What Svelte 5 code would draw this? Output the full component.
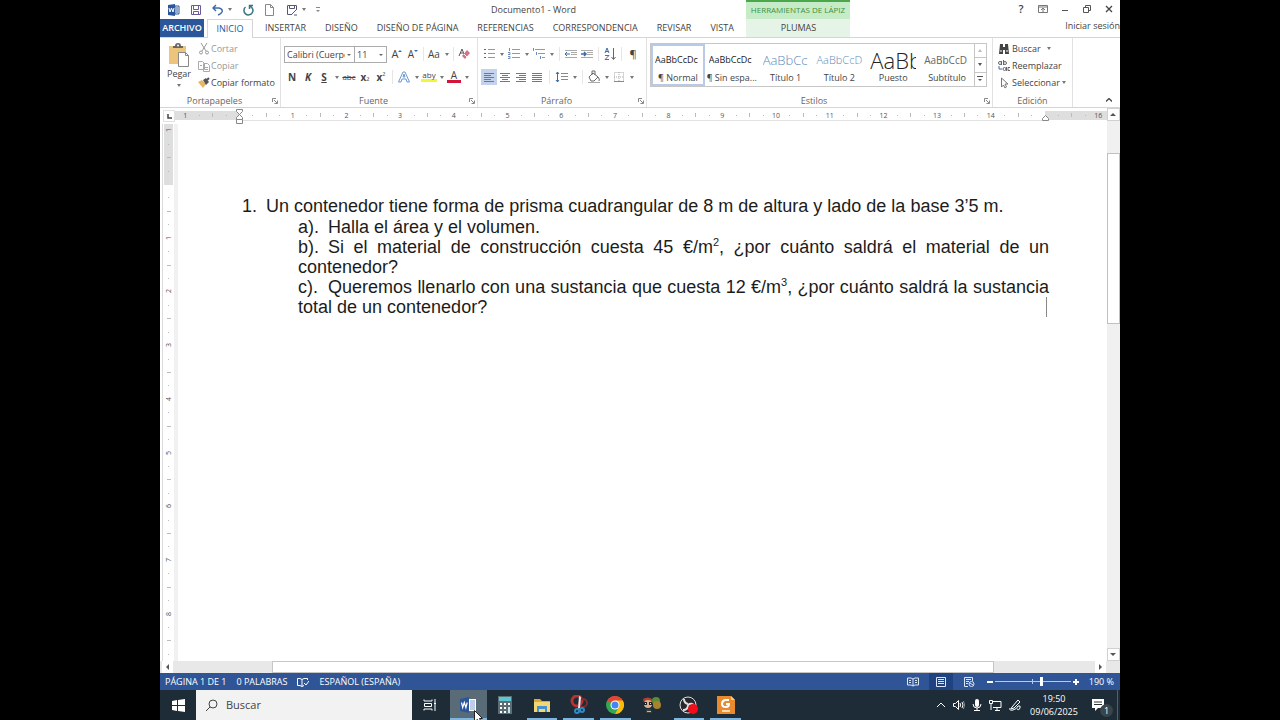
<script>
    let font = 'Calibri (Cuerpo)';
    let size = '11';
    let zoom = 62;
    let search = '';
    let style = 'Normal';
    let align = 'left';

    const tabs = ['INSERTAR', 'DISEÑO', 'DISEÑO DE PÁGINA', 'REFERENCIAS', 'CORRESPONDENCIA', 'REVISAR', 'VISTA'];

    const styles = [
        { name: 'Normal', label: '¶ Normal', sample: 'AaBbCcDc', kind: 'plain' },
        { name: 'Sin espaciado', label: '¶ Sin espa...', sample: 'AaBbCcDc', kind: 'plain' },
        { name: 'Título 1', label: 'Título 1', sample: 'AaBbCc', kind: 'h1' },
        { name: 'Título 2', label: 'Título 2', sample: 'AaBbCcD', kind: 'h2' },
        { name: 'Puesto', label: 'Puesto', sample: 'AaBb', kind: 'title' },
        { name: 'Subtítulo', label: 'Subtítulo', sample: 'AaBbCcD', kind: 'sub' }
    ];

    const apps = [
        { name: 'Word', icon: 'word', open: true, active: true },
        { name: 'Calculadora', icon: 'calc' },
        { name: 'Explorador', icon: 'folder', open: true },
        { name: 'Recortes', icon: 'snip', open: true },
        { name: 'Chrome', icon: 'chrome', open: true },
        { name: 'Juego', icon: 'game' },
        { name: 'OBS', icon: 'obs', open: true },
        { name: 'Lector', icon: 'reader', open: true }
    ];

    const alignments = [
        { id: 'left', d: 'M3 4h10M3 6h7M3 8h10M3 10h7M3 12h10' },
        { id: 'center', d: 'M3 4h10M5 6h6M3 8h10M5 10h6M3 12h10' },
        { id: 'right', d: 'M3 4h10M6 6h7M3 8h10M6 10h7M3 12h10' },
        { id: 'justify', d: 'M3 4h10M3 6h10M3 8h10M3 10h10M3 12h10' }
    ];

    // distance between two centimetre marks, in px
    const cm = 53.7;
    const hMarks = [-1, ...Array.from({ length: 14 }, (_, i) => i + 1), 16];
    const vMarks = [-1, 1, 2, 3, 4, 5, 6, 7, 8];
    const quarters = Array.from({ length: 70 }, (_, i) => i - 4).filter((i) => i % 4 !== 0);
</script>

{#snippet caret(label)}
    <button class="caret" aria-label={label}><svg width="4" height="3" viewBox="0 0 4 3"><path d="M0 0h4L2 3z" fill="#777" /></svg></button>
{/snippet}

{#snippet launcher()}
    <button class="launcher" aria-label="Más opciones">
        <svg width="6" height="6" viewBox="0 0 6 6" fill="none" stroke="#888"><path d="M.5 4V.5H4M2 2l3 3M5.500 2.500v3h-3" /></svg>
    </button>
{/snippet}

{#snippet appIcon(name)}
    <svg width="20" height="20" viewBox="0 0 20 20">
        {#if name === 'word'}
            <path d="M10 4h8v12h-8z" fill="#fff" /><path d="M12 6h5M12 8h5M12 10h5M12 12h5M12 14h5" stroke="#7d9bd0" />
            <path d="M2 4l9-2v16l-9-2z" fill="#2b579a" /><path d="M3.500 7.500l1.200 5 1.600-5 1.600 5 1.300-5" fill="none" stroke="#fff" stroke-width="1.200" />
        {:else if name === 'calc'}
            <path d="M3 1h14v18H3z" fill="#5d6d76" /><path d="M4 2h12v4H4z" fill="#5cc6d2" />
            <path d="M5 8h2v2H5zM9 8h2v2H9zM5 12h2v2H5zM9 12h2v2H9zM5 16h2v2H5zM9 16h2v2H9zM13 8h2v2h-2z" fill="#fff" /><path d="M13 12h2v6h-2z" fill="#bfe5ec" />
        {:else if name === 'folder'}
            <path d="M2 4h6l2 2h8v11H2z" fill="#d9a93a" /><path d="M2 7h16v10H2z" fill="#f3d774" /><path d="M5 11h10v6h-2v-3H7v3H5z" fill="#4691cf" />
        {:else if name === 'snip'}
            <circle cx="8" cy="6" r="5" fill="none" stroke="#b8322e" stroke-width="3" /><circle cx="14" cy="8" r="4" fill="none" stroke="#7e2d30" stroke-width="2" />
            <path d="M10 1l2 1-1 11-2 1z" fill="#e8eef2" /><circle cx="8" cy="16" r="2" fill="none" stroke="#2f8ac5" stroke-width="2" /><circle cx="13" cy="15" r="2" fill="none" stroke="#2f8ac5" stroke-width="2" />
        {:else if name === 'chrome'}
            <circle cx="10" cy="10" r="9" fill="#33a852" /><path d="M10 10L2.200 5.500A9 9 0 0 1 17.800 5.500z" fill="#e94235" />
            <path d="M10 5.500h7.800A9 9 0 0 1 10 19l4-7z" fill="#fbbc05" /><circle cx="10" cy="10" r="4.500" fill="#fff" /><circle cx="10" cy="10" r="3.500" fill="#4285f4" />
        {:else if name === 'game'}
            <circle cx="14" cy="6" r="4" fill="#5c8d32" /><circle cx="15" cy="10" r="4" fill="#a8822f" /><path d="M1 4q5-3 9 0v4H2z" fill="#b5402f" />
            <circle cx="6" cy="9" r="4" fill="#d9b08e" /><path d="M2 7h3v3H2zM7 7h3v3H7z" fill="#222" /><path d="M3 8h1v1H3zM8 8h1v1H8z" fill="#ddd" /><path d="M4 14h5l1 4H4z" fill="#3b3f3a" /><path d="M5 16.500h4" stroke="#bbb" />
        {:else if name === 'obs'}
            <circle cx="9" cy="10" r="8" fill="#25272c" stroke="#ddd" /><path d="M9 9q-4-1-4-5M9 10q4-3 6 1M9 10q0 5-5 5" fill="none" stroke="#ddd" stroke-width="2" /><circle cx="14" cy="14" r="5" fill="#f20d19" />
        {:else}
            <path d="M1 1h14l4 4v14H1z" fill="#e98a2c" /><path d="M15 1v4h4z" fill="#ffc88c" />
            <path d="M13 5H9q-3 1-3 4t4 3q3 0 3-3h-3" fill="none" stroke="#fff" stroke-width="2" /><path d="M6 16h8" stroke="#ffd9ae" stroke-width="2" />
        {/if}
    </svg>
{/snippet}

<div class="screen">
    <div class="word">
        <header>
            <div class="main-head">
                <div class="titlebar">
                    <div class="quick">
                        <svg width="12" height="12" viewBox="0 0 12 12"><path d="M7 2h4v8H7z" fill="#fff" stroke="#2b579a" /><path d="M8 4h2M8 6h2M8 8h2" stroke="#2b579a" /><path d="M0 1l7-1v12l-7-1z" fill="#2b579a" /><path d="M1 4l1 4 1.500-4L5 8l1-4" stroke="#fff" fill="none" /></svg>
                        <button aria-label="Guardar"><svg width="12" height="12" viewBox="0 0 12 12" fill="none" stroke="#6d5b96"><path d="M1.500 1.500h9v9h-9zM3.500 1.500v4h5v-4M3.500 10.500v-3h5v3" /></svg></button>
                        <button aria-label="Deshacer"><svg width="12" height="12" viewBox="0 0 12 12" fill="none" stroke="#3c6ba8" stroke-width="1.500"><path d="M4 1L1 4l3 3M1 4h6q4 1 3 4-1 2-4 3" /></svg></button>
                        {@render caret('Historial')}
                        <button aria-label="Rehacer"><svg width="12" height="12" viewBox="0 0 12 12" fill="none" stroke="#3b7581" stroke-width="1.500"><path d="M3.500 3a4.500 4.500 0 1 0 4.500-.8M11 1.500H7.500V5" /></svg></button>
                        <button aria-label="Nuevo"><svg width="12" height="12" viewBox="0 0 12 12" fill="none" stroke="#888"><path d="M1.500.5h5l3 3v8h-8zM6.500.5v3h3" /></svg></button>
                        <button aria-label="Guardar como"><svg width="12" height="12" viewBox="0 0 12 12" fill="none" stroke="#55577c"><path d="M10.500 5V1.500h-9v9H5M3.500 1.500v3h5v-3M5 11l6-6M8 11h3" /></svg></button>
                        {@render caret('Más formatos')}
                        <button class="more" aria-label="Personalizar"><svg width="4" height="6" viewBox="0 0 4 6"><path d="M0 .5h4" stroke="#888" /><path d="M0 3h4L2 5z" fill="#888" /></svg></button>
                    </div>
                    <div class="doc-title">Documento1 - Word</div>
                </div>
                <nav class="tabs">
                    <button class="file">ARCHIVO</button>
                    <button class="tab active">INICIO</button>
                    {#each tabs as tab}
                        <button class="tab">{tab}</button>
                    {/each}
                </nav>
            </div>
            <div class="context">
                <div class="context-name">HERRAMIENTAS DE LÁPIZ</div>
                <button class="tab">PLUMAS</button>
            </div>
            <div class="side-head">
                <div class="controls">
                    <button class="help" aria-label="Ayuda">?</button>
                    <button aria-label="Opciones de la cinta"><svg width="10" height="8" viewBox="0 0 10 8" fill="none" stroke="#777"><path d="M.5.5h9v7h-9zM.5 2h9M5 7V3.500M3 5l2-2 2 2" /></svg></button>
                    <button aria-label="Minimizar"><svg width="8" height="8" viewBox="0 0 8 8"><path d="M1 5.500h6" stroke="#555" /></svg></button>
                    <button aria-label="Restaurar"><svg width="8" height="8" viewBox="0 0 8 8" fill="none" stroke="#555"><path d="M2.500 2V.5h5v5H6M.5 2.500h5v5h-5z" /></svg></button>
                    <button aria-label="Cerrar"><svg width="8" height="8" viewBox="0 0 8 8"><path d="M1 1l6 6M7 1L1 7" stroke="#444" stroke-width="1.300" /></svg></button>
                </div>
                <a class="signin" href="#cuenta">Iniciar sesión</a>
            </div>
        </header>

        <section class="ribbon">
            <div class="group clipboard">
                <div class="body">
                    <button class="paste">
                        <svg width="22" height="24" viewBox="0 0 22 24"><path d="M1 3h17v18H1z" fill="#edc47c" /><path d="M5 5V3h2q0-3 3-3t3 3h2v2z" fill="#666" /><circle cx="10" cy="2.500" r="1" fill="#fff" /><path d="M10.500 9.500h7l3 3v11h-10z" fill="#fff" stroke="#888" /><path d="M17.500 9.500v3h3" fill="none" stroke="#888" /></svg>
                        <span>Pegar</span>
                        <svg width="4" height="3" viewBox="0 0 4 3"><path d="M0 0h4L2 3z" fill="#777" /></svg>
                    </button>
                    <div class="list">
                        <button disabled><svg width="12" height="12" viewBox="0 0 12 12" fill="none" stroke="#999"><path d="M3 0l5 8M9 0L4 8" /><circle cx="3" cy="9.500" r="1.500" /><circle cx="9" cy="9.500" r="1.500" /></svg>Cortar</button>
                        <button disabled><svg width="12" height="12" viewBox="0 0 12 12" fill="#fff" stroke="#aaa"><path d="M.5 1.500h4l2 2v6h-6zM5.500 3.500h4l2 2v6h-6zM7 7.500h3M7 9.500h3M2 5.500h2" /></svg>Copiar</button>
                        <button><svg width="12" height="12" viewBox="0 0 12 12"><path d="M0 5l4-2 4 4-3 4z" fill="#e8b765" /><path d="M5 3l3-2 3 4-3 3z" fill="#555" /><path d="M9 3l2-2" stroke="#555" stroke-width="2" /></svg>Copiar formato</button>
                    </div>
                </div>
                <footer><span>Portapapeles</span>{@render launcher()}</footer>
            </div>

            <div class="group font">
                <div class="body rows">
                    <div class="row">
                        <div class="combo family">
                            <select aria-label="Fuente" bind:value={font}><option>Calibri (Cuerpo)</option><option>Arial</option></select>
                        </div>
                        <div class="combo size">
                            <select aria-label="Tamaño" bind:value={size}><option>11</option><option>12</option></select>
                        </div>
                        <button class="tool big" aria-label="Aumentar fuente">A<svg width="4" height="10" viewBox="0 0 4 10"><path d="M0 3l2-2 2 2z" fill="#3c6ba8" /></svg></button>
                        <button class="tool" aria-label="Disminuir fuente">A<svg width="4" height="10" viewBox="0 0 4 10"><path d="M0 1h4L2 3z" fill="#3c6ba8" /></svg></button>
                        <i class="sep slim"></i>
                        <button class="tool" aria-label="Mayúsculas">Aa</button>{@render caret('Mayúsculas')}
                        <i class="sep slim"></i>
                        <button class="tool" aria-label="Borrar formato"><svg width="14" height="14" viewBox="0 0 14 14"><path d="M2 9l3-7 2 5M3 6h3" fill="none" stroke="#555" /><path d="M5 9l5-6 3 3-5 6z" fill="#d9708a" /><path d="M7 7l3 3" stroke="#fff" /></svg></button>
                    </div>
                    <div class="row">
                        <button class="tool"><b>N</b></button>
                        <button class="tool"><b><em>K</em></b></button>
                        <button class="tool"><b><u>S</u></b></button>{@render caret('Subrayado')}
                        <button class="tool small"><s>abc</s></button>
                        <button class="tool"><b>x</b><sub>₂</sub></button>
                        <button class="tool"><b>x</b><sup>²</sup></button>
                        <i class="sep"></i>
                        <button class="tool" aria-label="Efectos de texto"><svg width="14" height="14" viewBox="0 0 14 14"><path d="M1.500 12L6 2h2l4.500 10h-2.500l-1-3h-4l-1 3zM6 7h2L7 4z" fill="#fff" stroke="#6c97cf" /></svg></button>{@render caret('Efectos')}
                        <button class="tool mark">aby</button>{@render caret('Resaltado')}
                        <button class="tool colour">A</button>{@render caret('Color de fuente')}
                    </div>
                </div>
                <footer><span>Fuente</span>{@render launcher()}</footer>
            </div>

            <div class="group paragraph">
                <div class="body rows">
                    <div class="row">
                        <button class="tool" aria-label="Viñetas"><svg width="14" height="14" viewBox="0 0 14 14"><path d="M2 2.500h2M2 6.500h2M2 10.500h2" stroke="#3c6ba8" /><path d="M6 2.500h7M6 6.500h7M6 10.500h7" stroke="#999" /></svg></button>{@render caret('Viñetas')}
                        <button class="tool" aria-label="Numeración"><svg width="14" height="14" viewBox="0 0 14 14"><path d="M2.500 1v3M1 5.500h2v2H1M1 9.500h2v2H1" fill="none" stroke="#6c8db8" /><path d="M5 2.500h8M5 6.500h8M5 10.500h8" stroke="#999" /></svg></button>{@render caret('Numeración')}
                        <button class="tool" aria-label="Lista multinivel"><svg width="14" height="14" viewBox="0 0 14 14"><path d="M1.500 1v3M4.500 5v3M8.500 9v3" stroke="#6c8db8" /><path d="M3 2.500h10M6 6.500h7M10 10.500h3" stroke="#999" /></svg></button>{@render caret('Lista multinivel')}
                        <i class="sep"></i>
                        <button class="tool" aria-label="Disminuir sangría"><svg width="14" height="14" viewBox="0 0 14 14" fill="none"><path d="M1 3.500h12M7 5.500h6M7 7.500h6M1 10.500h12" stroke="#aaa" /><path d="M6 7H1M3 5L1 7l2 2" stroke="#3c6ba8" /></svg></button>
                        <button class="tool" aria-label="Aumentar sangría"><svg width="14" height="14" viewBox="0 0 14 14" fill="none"><path d="M1 3.500h12M7 5.500h6M7 7.500h6M1 10.500h12" stroke="#aaa" /><path d="M1 7h5M4 5l2 2-2 2" stroke="#3c6ba8" stroke-width="1.500" /></svg></button>
                        <i class="sep"></i>
                        <button class="tool" aria-label="Ordenar"><svg width="14" height="14" viewBox="0 0 14 14" fill="none"><path d="M2 6l2-5 2 5M3 4.500h2" stroke="#3c6ba8" /><path d="M2 8.500h4l-4 4h4" stroke="#7b5aa0" /><path d="M10.500 1v11M8.500 10l2 2.500 2-2.500" stroke="#666" /></svg></button>
                        <i class="sep"></i>
                        <button class="tool big">¶</button>
                    </div>
                    <div class="row">
                        {#each alignments as a}
                            <button class="tool" class:on={align === a.id} aria-label={a.id} on:click={() => (align = a.id)}><svg width="16" height="16" viewBox="0 0 16 16"><path d={a.d} transform="translate(0 .5)" stroke="#777" /></svg></button>
                        {/each}
                        <i class="sep wide"></i>
                        <button class="tool" aria-label="Interlineado"><svg width="14" height="14" viewBox="0 0 14 14" fill="none"><path d="M2.500 2v10M1 4l1.500-2L4 4M1 10l1.500 2L4 10" stroke="#3c6ba8" /><path d="M6 3.500h7M6 6.500h7M6 9.500h7" stroke="#888" /></svg></button>{@render caret('Interlineado')}
                        <i class="sep"></i>
                        <button class="tool" aria-label="Sombreado"><svg width="14" height="14" viewBox="0 0 14 14" fill="none"><path d="M2 7l4-4 5 4-4 4H4zM5 5V1h3v4M11 7q2 2 1 4" stroke="#666" /><path d="M1 12.500h12" stroke="#aaa" /></svg></button>{@render caret('Sombreado')}
                        <button class="tool" aria-label="Bordes"><svg width="14" height="14" viewBox="0 0 14 14" fill="none"><path d="M2.500 2.500h9v9h-9zM7 2v10M2 7h10" stroke="#aaa" stroke-dasharray="1 1" /><path d="M2 11.500h10" stroke="#888" /></svg></button>{@render caret('Bordes')}
                    </div>
                </div>
                <footer><span>Párrafo</span>{@render launcher()}</footer>
            </div>

            <div class="group styles">
                <div class="body">
                    <div class="gallery">
                        {#each styles as s}
                            <button class="style" class:chosen={style === s.name} on:click={() => (style = s.name)}>
                                <span class="sample {s.kind}">{s.sample}</span>
                                <span class="name">{s.label}</span>
                            </button>
                        {/each}
                        <div class="scroller">
                            <button aria-label="Fila anterior"><svg width="4" height="3" viewBox="0 0 4 3"><path d="M0 3h4L2 0z" fill="#bbb" /></svg></button>
                            <button aria-label="Fila siguiente"><svg width="4" height="3" viewBox="0 0 4 3"><path d="M0 0h4L2 3z" fill="#555" /></svg></button>
                            <button aria-label="Más estilos"><svg width="6" height="6" viewBox="0 0 6 6"><path d="M0 .5h6" stroke="#555" /><path d="M1 3h4L3 5z" fill="#555" /></svg></button>
                        </div>
                    </div>
                </div>
                <footer><span>Estilos</span>{@render launcher()}</footer>
            </div>

            <div class="group editing">
                <div class="body">
                    <div class="list">
                        <button><svg width="12" height="12" viewBox="0 0 12 12"><path d="M2 1h3v3h2V1h3l1 10H7V7H5v4H1z" fill="#444" /><path d="M2 8h2M8 8h2" stroke="#fff" /></svg>Buscar<svg class="drop" width="4" height="3" viewBox="0 0 4 3"><path d="M0 0h4L2 3z" fill="#777" /></svg></button>
                        <button><svg width="12" height="12" viewBox="0 0 12 12" fill="none" stroke="#666"><circle cx="2" cy="3" r="1.500" /><path d="M3.500 1v4M5.500 0v5" /><circle cx="7" cy="3" r="1.500" /><path d="M1 6v3h3" stroke="#3c6ba8" /><circle cx="6.500" cy="9" r="1.500" /><path d="M8.500 7v4M12 7.500h-2v3h2" /></svg>Reemplazar</button>
                        <button><svg width="12" height="12" viewBox="0 0 12 12" fill="#fff" stroke="#777"><path d="M3.500 1v9l2-2 1.500 3 1.500-1-1.500-3H10z" /></svg>Seleccionar<svg class="drop near" width="4" height="3" viewBox="0 0 4 3"><path d="M0 0h4L2 3z" fill="#777" /></svg></button>
                    </div>
                </div>
                <footer><span>Edición</span></footer>
            </div>
            <button class="collapse" aria-label="Contraer la cinta"><svg width="6" height="4" viewBox="0 0 6 4"><path d="M0 3.500l3-3 3 3" fill="none" stroke="#444" stroke-width="1.300" /></svg></button>
        </section>

        <main>
            <div class="work">
                <div class="ruler-row">
                    <button class="tabstop" aria-label="Tabulación"><svg width="5" height="5" viewBox="0 0 5 5"><path d="M1 0v4h4" fill="none" stroke="#444" stroke-width="1.500" /></svg></button>
                    <svg class="hruler" height="16">
                        <rect y="3" width="100%" height="9" fill="#dedede" />
                        <rect x="64" y="3" width="806" height="9" fill="#fff" />
                        <path d="M64 12.500h806" stroke="#e2e2e2" />
                        {#each hMarks as m}
                            <text x={64 + m * cm} y="10" text-anchor="middle">{Math.abs(m)}</text>
                        {/each}
                        {#each quarters as q}
                            <path d="M{Math.round(64 + (q * cm) / 4)}.5 {q % 2 ? 7 : 5}v{q % 2 ? 1 : 4}" stroke="#bbb" />
                        {/each}
                        <path d="M61.500 1.500h6v2l-3 3-3-3zM61.500 11.500v-2l3-3 3 3v2zM61.500 11.500h6v4h-6z" fill="#fff" stroke="#888" />
                        <path d="M867.500 12.500v-2l3-3 3 3v2z" fill="#fff" stroke="#888" />
                    </svg>
                </div>
                <div class="canvas">
                    <svg class="vruler" width="10">
                        <rect width="9" height="61" fill="#dedede" />
                        {#each vMarks as m}
                            <text transform="translate(7 {Math.round(60 + m * cm)}) rotate(-90)" text-anchor="middle">{Math.abs(m)}</text>
                        {/each}
                        {#each quarters.filter((q) => q < 36) as q}
                            <path d="M{q % 2 ? 4 : 3} {Math.round(60 + (q * cm) / 4)}.5h{q % 2 ? 1 : 4}" stroke="#bbb" />
                        {/each}
                    </svg>
                    <article class="page">
                        <p class="item"><span class="num">1.</span>Un contenedor tiene forma de prisma cuadrangular de 8 m de altura y lado de la base 3’5 m.</p>
                        <div class="parts">
                            <p><span class="letter">a).</span>Halla el área y el volumen.</p>
                            <p><span class="letter">b).</span>Si el material de construcción cuesta 45 €/m<sup>2</sup>, ¿por cuánto saldrá el material de un contenedor?</p>
                            <p><span class="letter">c).</span>Queremos llenarlo con una sustancia que cuesta 12 €/m<sup>3</sup>, ¿por cuánto saldrá la sustancia total de un contenedor?</p>
                            <i class="insertion"></i>
                        </div>
                    </article>
                </div>
            </div>
            <div class="vscroll">
                <button aria-label="Subir"><svg width="6" height="3" viewBox="0 0 6 3"><path d="M0 3h6L3 0z" fill="#555" /></svg></button>
                <div class="vthumb"></div>
                <button aria-label="Bajar"><svg width="6" height="3" viewBox="0 0 6 3"><path d="M0 0h6L3 3z" fill="#555" /></svg></button>
            </div>
        </main>

        <div class="hscroll">
            <button aria-label="Izquierda"><svg width="3" height="6" viewBox="0 0 3 6"><path d="M3 0v6L0 3z" fill="#555" /></svg></button>
            <div class="hthumb"></div>
            <button aria-label="Derecha"><svg width="3" height="6" viewBox="0 0 3 6"><path d="M0 0v6l3-3z" fill="#555" /></svg></button>
        </div>

        <div class="status">
            <span class="pages">PÁGINA 1 DE 1</span>
            <span class="words">0 PALABRAS</span>
            <svg class="proof" width="12" height="10" viewBox="0 0 12 10" fill="none" stroke="#fff"><path d="M7 1.500l-2 1-2-1H.5v7H3l2 1 2-1M5 2.500v7M7 1.500h3.500V3M7 6l2 2 3-4" /></svg>
            <span>ESPAÑOL (ESPAÑA)</span>
            <div class="views">
                <button aria-label="Modo de lectura"><svg width="12" height="10" viewBox="0 0 12 10" fill="none" stroke="#dbe5f5"><path d="M6 2L4 1H.5v7H4l2 1 2-1h3.500V1H8zM6 2v7M2 3.500h2M2 5.500h2M8 3.500h2M8 5.500h2" /></svg></button>
                <button class="on" aria-label="Diseño de impresión"><svg width="12" height="10" viewBox="0 0 12 10" fill="none" stroke="#dbe5f5"><path d="M1.500.5h9v9h-9zM3 2.500h6M3 4.500h6M3 6.500h6" /></svg></button>
                <button aria-label="Diseño web"><svg width="12" height="10" viewBox="0 0 12 10" fill="none" stroke="#dbe5f5"><path d="M5 9.500H1.500v-9h8V4M3 2.500h5M3 4.500h3M3 6.500h2" /><circle cx="8.500" cy="7" r="2.500" /><path d="M7 6l3 2" /></svg></button>
            </div>
            <div class="zoom">
                <button aria-label="Alejar"><svg width="6" height="6" viewBox="0 0 6 6"><path d="M0 3h6" stroke="#fff" stroke-width="2" /></svg></button>
                <input type="range" min="0" max="100" bind:value={zoom} aria-label="Zoom" />
                <button aria-label="Acercar"><svg width="6" height="6" viewBox="0 0 6 6"><path d="M0 3h6M3 0v6" stroke="#fff" stroke-width="2" /></svg></button>
            </div>
            <span class="percent">190 %</span>
        </div>
    </div>

    <div class="taskbar">
        <button class="start" aria-label="Inicio"><svg width="13" height="13" viewBox="0 0 13 13"><path d="M0 2l5-1v5H0zM6 1l7-1v6H6zM0 7h5v5l-5-1zM6 7h7v6l-7-1z" fill="#fff" /></svg></button>
        <label class="search">
            <svg width="13" height="13" viewBox="0 0 13 13" fill="none" stroke="#444"><circle cx="8" cy="5" r="4" /><path d="M5 8l-4 4" /></svg>
            <input type="text" placeholder="Buscar" bind:value={search} aria-label="Buscar" />
        </label>
        <button class="taskview" aria-label="Vista de tareas"><svg width="14" height="12" viewBox="0 0 14 12" fill="none" stroke="#fff"><path d="M1 .5v1.500h8V.5M1.500 4.500h7v3h-7zM1 11.500V10h8v1.500M12 0v12M11 4.500h2" /></svg></button>
        <div class="apps">
            {#each apps as app}
                <button class="app" class:open={app.open} class:active={app.active} aria-label={app.name}>
                    {@render appIcon(app.icon)}
                    {#if app.active}
                        <svg class="pointer" width="9" height="14" viewBox="0 0 9 14"><path d="M.5.5v11l3-2 2 4 2-1-2-4h3z" fill="#fff" stroke="#222" /></svg>
                    {/if}
                </button>
            {/each}
        </div>
        <div class="tray">
            <svg width="10" height="12" viewBox="0 0 10 12"><path d="M1 8l4-4 4 4" fill="none" stroke="#fff" /></svg>
            <svg width="12" height="12" viewBox="0 0 12 12" fill="none" stroke="#fff"><path d="M.5 4.500h2l3-3v9l-3-3h-2zM7 4q1 2 0 4M9 3q2 3 0 6" /><path d="M10.500 2q2 4 0 8" stroke="#899" /></svg>
            <svg width="10" height="14" viewBox="0 0 10 14"><rect x="3" y="1" width="4" height="8" rx="2" fill="#fff" /><path d="M1 6q0 4 4 4t4-4M5 10v3" fill="none" stroke="#fff" /><path d="M2 12.500h6" stroke="#fff" /></svg>
            <svg width="13" height="12" viewBox="0 0 13 12" fill="none" stroke="#fff"><path d="M4 2.500h8v6H4M8 9v2M6 11.500h5M.5 1.500h3v3h-3zM2 5v6" /></svg>
            <svg width="13" height="12" viewBox="0 0 13 12" fill="none" stroke="#fff"><path d="M3 8l6-7 2 2-6 6-3 1zM1 9q-1 3 3 2t5-4q3-1 2 2t-3 1" /></svg>
        </div>
        <div class="clock"><span>19:50</span><span>09/06/2025</span></div>
        <button class="notes" aria-label="Notificaciones">
            <svg width="14" height="14" viewBox="0 0 14 14"><path d="M0 1h12v9H6l-3 3v-3H0z" fill="#fff" /><path d="M2 4h8M2 6.500h8" stroke="#333" /></svg>
            <span class="badge">1</span>
        </button>
    </div>
</div>

<style>
    :global(body) {
        background: #000;
    }

    .screen {
        width: min(100%, 133.333vh);
        height: 100vh;
        margin: 0 auto;
        display: flex;
        flex-direction: column;
        background: #fff;
        color: #444;
        font: 9px/12px 'Open Sans', 'Noto Sans', sans-serif;
        overflow: hidden;
    }

    button {
        border: none;
        background: none;
        padding: 0;
        margin: 0;
        color: inherit;
        font: inherit;
        display: flex;
        align-items: center;
        justify-content: center;
        white-space: nowrap;
    }

    svg {
        flex: none;
        display: block;
    }

    .word {
        flex: 1;
        min-height: 0;
        display: flex;
        flex-direction: column;
    }

    header {
        display: flex;
        height: 38px;
        flex: none;
    }

    .main-head {
        width: 586px;
        display: flex;
        flex-direction: column;
    }

    .titlebar {
        height: 19px;
        display: flex;
        align-items: center;
    }

    .quick {
        display: flex;
        align-items: center;
        width: 331px;
        padding-left: 8px;
        box-sizing: border-box;
        gap: 10px;
    }

    .quick .caret {
        width: 4px;
        margin-left: -6px;
    }

    .more {
        width: 4px;
    }

    .tabs {
        flex: 1;
        display: flex;
        border-bottom: 1px solid #d5d5d5;
    }

    .file {
        width: 44px;
        margin-right: 3px;
        background: #2b579a;
        color: #fff;
        font-weight: 600;
    }

    .tab {
        padding: 0 9px 0 10px;
    }

    .tab.active {
        width: 46px;
        border: 1px solid #d5d5d5;
        border-bottom: none;
        background: #fff;
        color: #2b579a;
        margin: 0 2px -1px 0;
        padding: 0;
    }

    .context {
        width: 104px;
        background: #e6f4e8;
        border-top: 2px solid #4ca64c;
        border-bottom: 1px solid #d5d5d5;
        box-sizing: border-box;
        display: flex;
        flex-direction: column;
        text-align: center;
    }

    .context-name {
        height: 17px;
        line-height: 16px;
        font-size: 8px;
        background: #c5ecc7;
        color: #3f9142;
        white-space: nowrap;
    }

    .context .tab {
        flex: 1;
    }

    .side-head {
        flex: 1;
        border-bottom: 1px solid #d5d5d5;
        display: flex;
        flex-direction: column;
        align-items: flex-end;
    }

    .controls {
        height: 18px;
        display: flex;
    }

    .controls button {
        width: 22px;
    }

    .help {
        font-size: 11px;
        font-weight: 600;
    }

    .signin {
        color: inherit;
        text-decoration: none;
        line-height: 16px;
    }

    .ribbon {
        height: 70px;
        flex: none;
        display: flex;
        border-bottom: 1px solid #d5d5d5;
        box-sizing: border-box;
    }

    .group {
        display: flex;
        flex-direction: column;
        border-right: 1px solid #e1e1e1;
        box-sizing: border-box;
        min-width: 0;
    }

    .body {
        flex: 1;
        display: flex;
    }

    .group footer {
        height: 13px;
        display: flex;
        align-items: center;
        color: #666;
    }

    .group footer span {
        flex: 1;
        text-align: center;
    }

    .launcher {
        width: 11px;
    }

    .clipboard {
        width: 121px;
    }

    .font {
        width: 197px;
    }

    .paragraph {
        width: 169px;
    }

    .styles {
        flex: 1;
        max-width: 346px;
    }

    .editing {
        width: 80px;
    }

    .paste {
        width: 38px;
        flex-direction: column;
        justify-content: flex-start;
        padding-top: 5px;
        gap: 1px;
    }

    .paste span {
        margin-bottom: 3px;
    }

    .list {
        display: flex;
        flex-direction: column;
        padding-top: 2px;
    }

    .list button {
        height: 17px;
        gap: 2px;
        justify-content: flex-start;
    }

    .list button:disabled {
        color: #999;
    }

    .clipboard .list button {
        gap: 1px;
    }

    .editing .list {
        padding-left: 5px;
    }

    .drop {
        margin-left: 4px;
    }

    .drop.near {
        margin-left: 0;
    }

    .rows {
        flex-direction: column;
        padding: 8px 0 0 3px;
        gap: 7px;
    }

    .row {
        display: flex;
        height: 16px;
    }

    .tool {
        width: 16px;
        font-size: 10px;
    }

    .tool.big {
        font-size: 11px;
    }

    .tool.small {
        font-size: 8px;
    }

    .tool.on {
        background: #c3d3ee;
    }

    .tool sub,
    .tool sup {
        line-height: 0;
        font-size: 9px;
    }

    .mark {
        font-size: 8px;
        box-shadow: inset 0 -3px #fff, inset 0 -6px #f4f43c;
        padding-bottom: 4px;
        box-sizing: border-box;
    }

    .colour {
        width: 14px;
        margin: 0 1px;
        border-bottom: 3px solid #d4143a;
        height: 14px;
    }

    .caret {
        width: 9px;
    }

    .sep {
        width: 1px;
        margin: 1px 3px;
        background: #e6e6e6;
    }

    .slim {
        margin: 1px 2px;
    }

    .wide {
        margin: 1px 4px;
    }

    .combo {
        border: 1px solid #ababab;
        box-sizing: border-box;
        height: 17px;
        display: flex;
        align-items: center;
        margin-right: -1px;
    }

    .combo::after {
        content: '';
        flex: none;
        border: 2px solid transparent;
        border-top-color: #666;
        border-bottom: none;
        margin-right: 3px;
    }

    .family {
        width: 71px;
    }

    .size {
        width: 33px;
        margin-right: 2px;
    }

    .combo select {
        appearance: none;
        border: none;
        background: none;
        flex: 1;
        min-width: 0;
        padding: 0 2px;
        color: #444;
        font: inherit;
    }

    .gallery {
        display: flex;
        height: 44px;
        margin: 5px 5px 0 3px;
        flex: 1;
        min-width: 0;
        border: 1px solid #c6c6c6;
        box-sizing: border-box;
    }

    .style {
        flex: 1;
        min-width: 0;
        flex-direction: column;
        justify-content: flex-end;
        overflow: hidden;
        padding: 0 4px 2px;
        box-sizing: border-box;
    }

    .style.chosen {
        box-shadow: inset 0 0 0 2px #b9c9e6;
    }

    .sample {
        width: 100%;
        height: 24px;
        line-height: 24px;
        overflow: hidden;
        text-align: left;
        color: #222;
    }

    .sample.h1 {
        font-size: 13px;
        color: #5b8dbb;
        font-weight: 300;
    }

    .sample.h2 {
        font-size: 11px;
        color: #5b8dbb;
        font-weight: 300;
    }

    .sample.title {
        font-size: 22px;
        font-weight: 300;
    }

    .sample.sub {
        font-size: 10px;
        color: #666;
    }

    .scroller {
        width: 11px;
        flex: none;
        display: flex;
        flex-direction: column;
        border-left: 1px solid #c6c6c6;
    }

    .scroller button {
        flex: 1;
    }

    .scroller button + button {
        border-top: 1px solid #c6c6c6;
    }

    .collapse {
        margin: auto 8px 5px auto;
    }

    main {
        flex: 1;
        min-height: 0;
        display: flex;
    }

    .work {
        flex: 1;
        min-width: 0;
        display: flex;
        flex-direction: column;
    }

    .ruler-row {
        display: flex;
        height: 16px;
    }

    .tabstop {
        width: 12px;
        height: 12px;
        margin: 2px 0 0 3px;
        border: 1px solid #e1e1e1;
    }

    .hruler {
        flex: 1;
        min-width: 0;
    }

    .hruler text,
    .vruler text {
        font-size: 7px;
        fill: #555;
    }

    .canvas {
        flex: 1;
        min-height: 0;
        display: flex;
    }

    .vruler {
        height: 100%;
        margin-left: 2px;
        padding-left: 1px;
        border-left: 1px solid #dcdcdc;
        border-right: 4px solid #f1f1f1;
    }

    .page {
        flex: 1;
        padding: 72px 58px 0 64px;
        color: #1c1c1c;
        font: 18px/20px 'Liberation Sans', Arial, sans-serif;
    }

    .page p {
        margin: 0;
    }

    .page .item {
        white-space: nowrap;
        margin-bottom: 1px;
    }

    .num {
        display: inline-block;
        width: 24px;
    }

    .parts {
        margin-left: 56px;
        text-align: justify;
        position: relative;
    }

    .letter {
        display: inline-block;
        width: 30px;
    }

    .page sup {
        font-size: 11px;
        line-height: 0;
    }

    .insertion {
        position: absolute;
        right: 2px;
        bottom: 0;
        width: 1px;
        height: 20px;
        background: #888;
    }

    .vscroll {
        width: 13px;
        background: #f0f0f0;
        display: flex;
        flex-direction: column;
    }

    .vscroll button {
        height: 13px;
        background: #fff;
        border: 1px solid #d0d0d0;
    }

    .vthumb {
        height: 31%;
        margin: 32px 0 auto;
        border: 1px solid #c0c0c0;
        background: #fff;
        box-sizing: border-box;
    }

    .hscroll {
        height: 12px;
        flex: none;
        display: flex;
        background: #e8e8e8;
        padding: 0 14px 0 2px;
    }

    .hscroll button {
        width: 11px;
        background: #fff;
    }

    .hthumb {
        flex: 1;
        margin: 0 101px 0 99px;
        background: #fff;
        border: 1px solid #c6c6c6;
        box-sizing: border-box;
    }

    .status {
        height: 17px;
        flex: none;
        display: flex;
        align-items: center;
        background: #2f5597;
        color: #fff;
        padding: 0 6px 0 5px;
        white-space: nowrap;
    }

    .pages,
    .words,
    .proof {
        margin-right: 10px;
    }

    .views {
        margin-left: auto;
        display: flex;
        align-self: stretch;
        gap: 4px;
    }

    .views button {
        width: 24px;
    }

    .views .on {
        background: #1f4380;
    }

    .zoom {
        display: flex;
        align-items: center;
        gap: 2px;
        margin: 0 10px 0 6px;
    }

    .zoom input {
        appearance: none;
        width: 76px;
        height: 12px;
        margin: 0;
        background:
            linear-gradient(#b9c9e6, #b9c9e6) center / 1px 5px no-repeat,
            linear-gradient(#b9c9e6, #b9c9e6) center / 100% 1px no-repeat;
    }

    .zoom input::-webkit-slider-thumb {
        appearance: none;
        width: 3px;
        height: 9px;
        background: #fff;
    }

    .taskbar {
        height: 30px;
        flex: none;
        display: flex;
        background: #1d2c36;
        color: #fff;
    }

    .start {
        width: 36px;
    }

    .search {
        width: 216px;
        box-sizing: border-box;
        padding: 0 9px;
        display: flex;
        align-items: center;
        gap: 8px;
        background: #f2f2f2;
    }

    .search input {
        flex: 1;
        min-width: 0;
        border: none;
        padding: 0;
        background: none;
        font: 11px/16px 'Open Sans', 'Noto Sans', sans-serif;
    }

    .search input::placeholder {
        color: #444;
        opacity: 1;
    }

    .taskview {
        width: 38px;
        padding-right: 2px;
    }

    .apps {
        width: 294px;
        display: grid;
        grid-template-columns: repeat(8, 1fr);
    }

    .app {
        position: relative;
        margin: 0 3px;
    }

    .app.open {
        box-shadow: inset 0 -2px #7fb6e0;
    }

    .app.active {
        margin: 0;
        background: #5a6b78;
    }

    .pointer {
        position: absolute;
        left: 24px;
        top: 20px;
    }

    .tray {
        margin-left: auto;
        display: flex;
        align-items: center;
        gap: 7px;
    }

    .clock {
        width: 56px;
        display: flex;
        flex-direction: column;
        justify-content: center;
        align-items: center;
        line-height: 13px;
        margin-left: 4px;
    }

    .notes {
        position: relative;
        width: 36px;
        border-right: 1px solid #51606b;
        margin-right: 2px;
    }

    .badge {
        position: absolute;
        right: 4px;
        bottom: 3px;
        width: 13px;
        height: 13px;
        line-height: 13px;
        border-radius: 50%;
        background: #39444b;
    }
</style>
